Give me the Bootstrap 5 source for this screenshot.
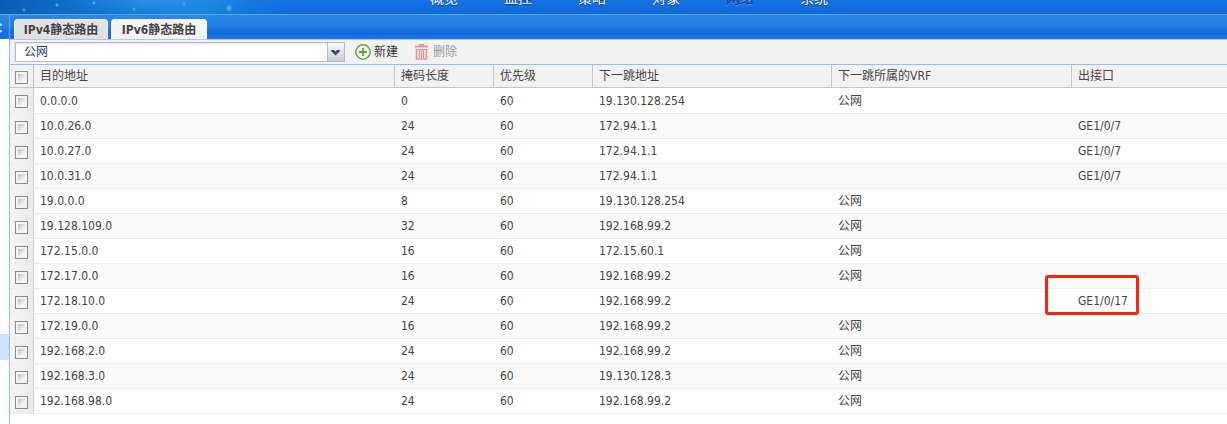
<!DOCTYPE html>
<html lang="zh-CN">
<head>
<meta charset="utf-8">
<meta name="viewport" content="width=device-width, initial-scale=1">
<title>静态路由</title>
<link href="https://cdn.jsdelivr.net/npm/bootstrap@5.3.0/dist/css/bootstrap.min.css" rel="stylesheet">
<style>
body{font:12px/16px "DejaVu Sans Condensed","Noto Sans CJK SC",sans-serif;color:#444;background:#fff}
.topnav{height:14px;padding-left:407px;background:
 radial-gradient(circle at 229px 8px,#4fa9ec 0 1px,transparent 4px),
 radial-gradient(circle at 94px 3px,#4aabe6 0 1px,transparent 2px),
 radial-gradient(circle at 57px 5px,#43a5e0 0 1px,transparent 2px),
 radial-gradient(circle at 134px 9px,#3da4ea 0 1px,transparent 2px),
 radial-gradient(circle at 184px 4px,#3da4ea 0 1px,transparent 2px),
 radial-gradient(circle at 24px 10px,#2f92d8 0 1px,transparent 2px),
 radial-gradient(ellipse 90px 16px at 160px 0,#2793e5,transparent),
 linear-gradient(90deg,#0a5fb4,#1173cf 90px,#1681de 210px,transparent 290px),
 linear-gradient(#1472e2,#106ade)}
.topnav a{width:74px;height:14px;line-height:20px;margin-top:-12px;font-size:14px;color:#fff;text-shadow:0 1px 1px #0a3c8c}
.topnav a.current{color:#0b2f86;text-shadow:0 1px 1px #5a9cf0}
.band{height:25px;border-top:1px solid #5ca5ee;background:linear-gradient(#2c87e6,#2380e5 45%,#166be0 70%,#1e6fe1)}
.side-head{width:9px}
.side-head svg{margin-top:8px}
.tabs{border-left:1px solid #6eadee;padding:4px 0 0 4px;gap:3px}
.tabs button{height:20px;width:96px;border:1px solid #fff;border-bottom:0;border-radius:4px 4px 0 0;background:#f4f4f4;color:#444;font-weight:700;line-height:16px}
.tabs button.current{width:94px;background:#e1e1e1;border-color:#f3f3f3}
.side{width:9px;padding-top:295px}
.side-row{height:26px;background:#d0e3fd}
.panel{min-width:0;border-left:1px solid #99bbe8;min-height:calc(100vh - 39px)}
.tools{height:26px;background:#f2f2f2;border-top:1px solid #a9c8f2;border-bottom:1px solid #99bce8;padding:2px 0 0 5px}
.combo{width:330px;height:20px;border:1px solid #b5b8c8;padding:0 24px 0 8px;appearance:none;color:#1c3560;border-radius:0;line-height:16px;
 background:url("data:image/svg+xml,%3Csvg xmlns='http://www.w3.org/2000/svg' width='17' height='18'%3E%3Cdefs%3E%3ClinearGradient id='g' x2='0' y2='1'%3E%3Cstop stop-color='%23fafafa'/%3E%3Cstop offset='1' stop-color='%23cdcdcd'/%3E%3C/linearGradient%3E%3C/defs%3E%3Cpath fill='url(%23g)' d='M0 0h17v18H0z'/%3E%3Cpath d='M.5 0v18' stroke='%23b5b8c8'/%3E%3Cpath d='M4 7h3l1.500 1.500L10 7h3v1l-4.500 4.500L4 8z' fill='%232a4b8d'/%3E%3C/svg%3E") right center no-repeat,linear-gradient(#ebebeb,#fff 3px)}
.tool{height:20px;color:#333;font-size:12px;line-height:16px;margin-left:10px;gap:3px}
.tool+.tool{margin-left:16px;gap:4px}
.tool:disabled{color:#999;opacity:1}
.routes{table-layout:fixed;width:100%;margin:0;border-collapse:separate;border-spacing:0}
.routes th,.routes td{height:25px;padding:0 0 0 6px;border:0 solid #ededed;border-bottom-width:1px;font-weight:400;vertical-align:middle;white-space:nowrap;line-height:16px}
.routes thead th{height:23px;background:#f2f2f2;border-bottom-color:#c5c5c5;border-right:1px solid #c5c5c5}
.routes thead th:last-child{border-right:0}
.routes tbody tr:first-child td{height:26px}
.routes tbody tr:nth-child(even) td{background:#fafafa}
.routes tbody td:first-child,.routes tbody tr:nth-child(even) td:first-child{background:linear-gradient(90deg,#f5f5f5,#eaeaea);border-right:1px solid #d0d0d0}
.routes tr>:first-child{padding-left:5px}
.routes input{display:block;appearance:none;width:13px;height:13px;margin:2px 0 0;border:1px solid #888b90;background:linear-gradient(135deg,#b9bec7,#f5f5f5 75%) content-box,#f4f4f4;padding:2px}
.marker{left:-27px;top:-14px;width:94px;height:40px;border:3px solid #fc2313;border-radius:3px;pointer-events:none}
</style>
</head>
<body>
<nav class="topnav d-flex overflow-hidden">
<a href="#" class="text-center text-decoration-none">概览</a><a href="#" class="text-center text-decoration-none">监控</a><a href="#" class="text-center text-decoration-none">策略</a><a href="#" class="text-center text-decoration-none">对象</a><a href="#" class="text-center text-decoration-none current">网络</a><a href="#" class="text-center text-decoration-none">系统</a>
</nav>
<div class="band d-flex">
<div class="side-head"><svg class="d-block" width="3" height="10"><path d="M0 1l1.500 1.500M0 9l1.500-1.500" stroke="#dcecff" stroke-width="2"/></svg></div>
<div class="tabs d-flex flex-grow-1" role="tablist">
<button type="button" role="tab" aria-selected="true" class="p-0 current">IPv4静态路由</button>
<button type="button" role="tab" aria-selected="false" class="p-0">IPv6静态路由</button>
</div>
</div>
<div class="d-flex">
<aside class="side flex-shrink-0"><div class="side-row"></div></aside>
<main class="panel flex-grow-1">
<div class="tools d-flex align-items-start">
<select class="combo" aria-label="VRF"><option>公网</option></select>
<button type="button" class="tool btn p-0 border-0 rounded-0 d-flex align-items-center"><svg width="16" height="16" fill="none" stroke="#66a83e"><circle cx="8" cy="8" r="7.200" stroke-width="1.500"/><path d="M8 4v8M4 8h8" stroke-width="1.800"/></svg>新建</button>
<button type="button" disabled class="tool btn p-0 border-0 rounded-0 d-flex align-items-center"><svg width="15" height="16" fill="none" stroke="#ee9490"><path d="M1 2.500h13M5 1h5" stroke-width="2"/><path d="M2.500 5v10h10V5" stroke-width="1.600"/><path d="M2 5.500h11" stroke-width="1"/><path d="M5.500 6v8M7.500 6v8M9.500 6v8" stroke-width="1.200"/></svg>删除</button>
</div>
<table class="routes">
<colgroup><col style="width:24px"><col style="width:361px"><col style="width:99px"><col style="width:99px"><col style="width:239px"><col style="width:240px"><col></colgroup>
<thead><tr><th><input type="checkbox" aria-label="全选"></th><th>目的地址</th><th>掩码长度</th><th>优先级</th><th>下一跳地址</th><th>下一跳所属的VRF</th><th>出接口</th></tr></thead>
<tbody>
<tr><td><input type="checkbox" aria-label="0.0.0.0"></td><td>0.0.0.0</td><td>0</td><td>60</td><td>19.130.128.254</td><td>公网</td><td></td></tr>
<tr><td><input type="checkbox" aria-label="10.0.26.0"></td><td>10.0.26.0</td><td>24</td><td>60</td><td>172.94.1.1</td><td></td><td>GE1/0/7</td></tr>
<tr><td><input type="checkbox" aria-label="10.0.27.0"></td><td>10.0.27.0</td><td>24</td><td>60</td><td>172.94.1.1</td><td></td><td>GE1/0/7</td></tr>
<tr><td><input type="checkbox" aria-label="10.0.31.0"></td><td>10.0.31.0</td><td>24</td><td>60</td><td>172.94.1.1</td><td></td><td>GE1/0/7</td></tr>
<tr><td><input type="checkbox" aria-label="19.0.0.0"></td><td>19.0.0.0</td><td>8</td><td>60</td><td>19.130.128.254</td><td>公网</td><td></td></tr>
<tr><td><input type="checkbox" aria-label="19.128.109.0"></td><td>19.128.109.0</td><td>32</td><td>60</td><td>192.168.99.2</td><td>公网</td><td></td></tr>
<tr><td><input type="checkbox" aria-label="172.15.0.0"></td><td>172.15.0.0</td><td>16</td><td>60</td><td>172.15.60.1</td><td>公网</td><td></td></tr>
<tr><td><input type="checkbox" aria-label="172.17.0.0"></td><td>172.17.0.0</td><td>16</td><td>60</td><td>192.168.99.2</td><td>公网</td><td></td></tr>
<tr><td><input type="checkbox" aria-label="172.18.10.0"></td><td>172.18.10.0</td><td>24</td><td>60</td><td>192.168.99.2</td><td></td><td class="position-relative">GE1/0/17<span class="marker position-absolute"></span></td></tr>
<tr><td><input type="checkbox" aria-label="172.19.0.0"></td><td>172.19.0.0</td><td>16</td><td>60</td><td>192.168.99.2</td><td>公网</td><td></td></tr>
<tr><td><input type="checkbox" aria-label="192.168.2.0"></td><td>192.168.2.0</td><td>24</td><td>60</td><td>192.168.99.2</td><td>公网</td><td></td></tr>
<tr><td><input type="checkbox" aria-label="192.168.3.0"></td><td>192.168.3.0</td><td>24</td><td>60</td><td>19.130.128.3</td><td>公网</td><td></td></tr>
<tr><td><input type="checkbox" aria-label="192.168.98.0"></td><td>192.168.98.0</td><td>24</td><td>60</td><td>192.168.99.2</td><td>公网</td><td></td></tr>
</tbody>
</table>
</main>
</div>
<script src="https://cdn.jsdelivr.net/npm/bootstrap@5.3.0/dist/js/bootstrap.bundle.min.js"></script>
</body>
</html>
